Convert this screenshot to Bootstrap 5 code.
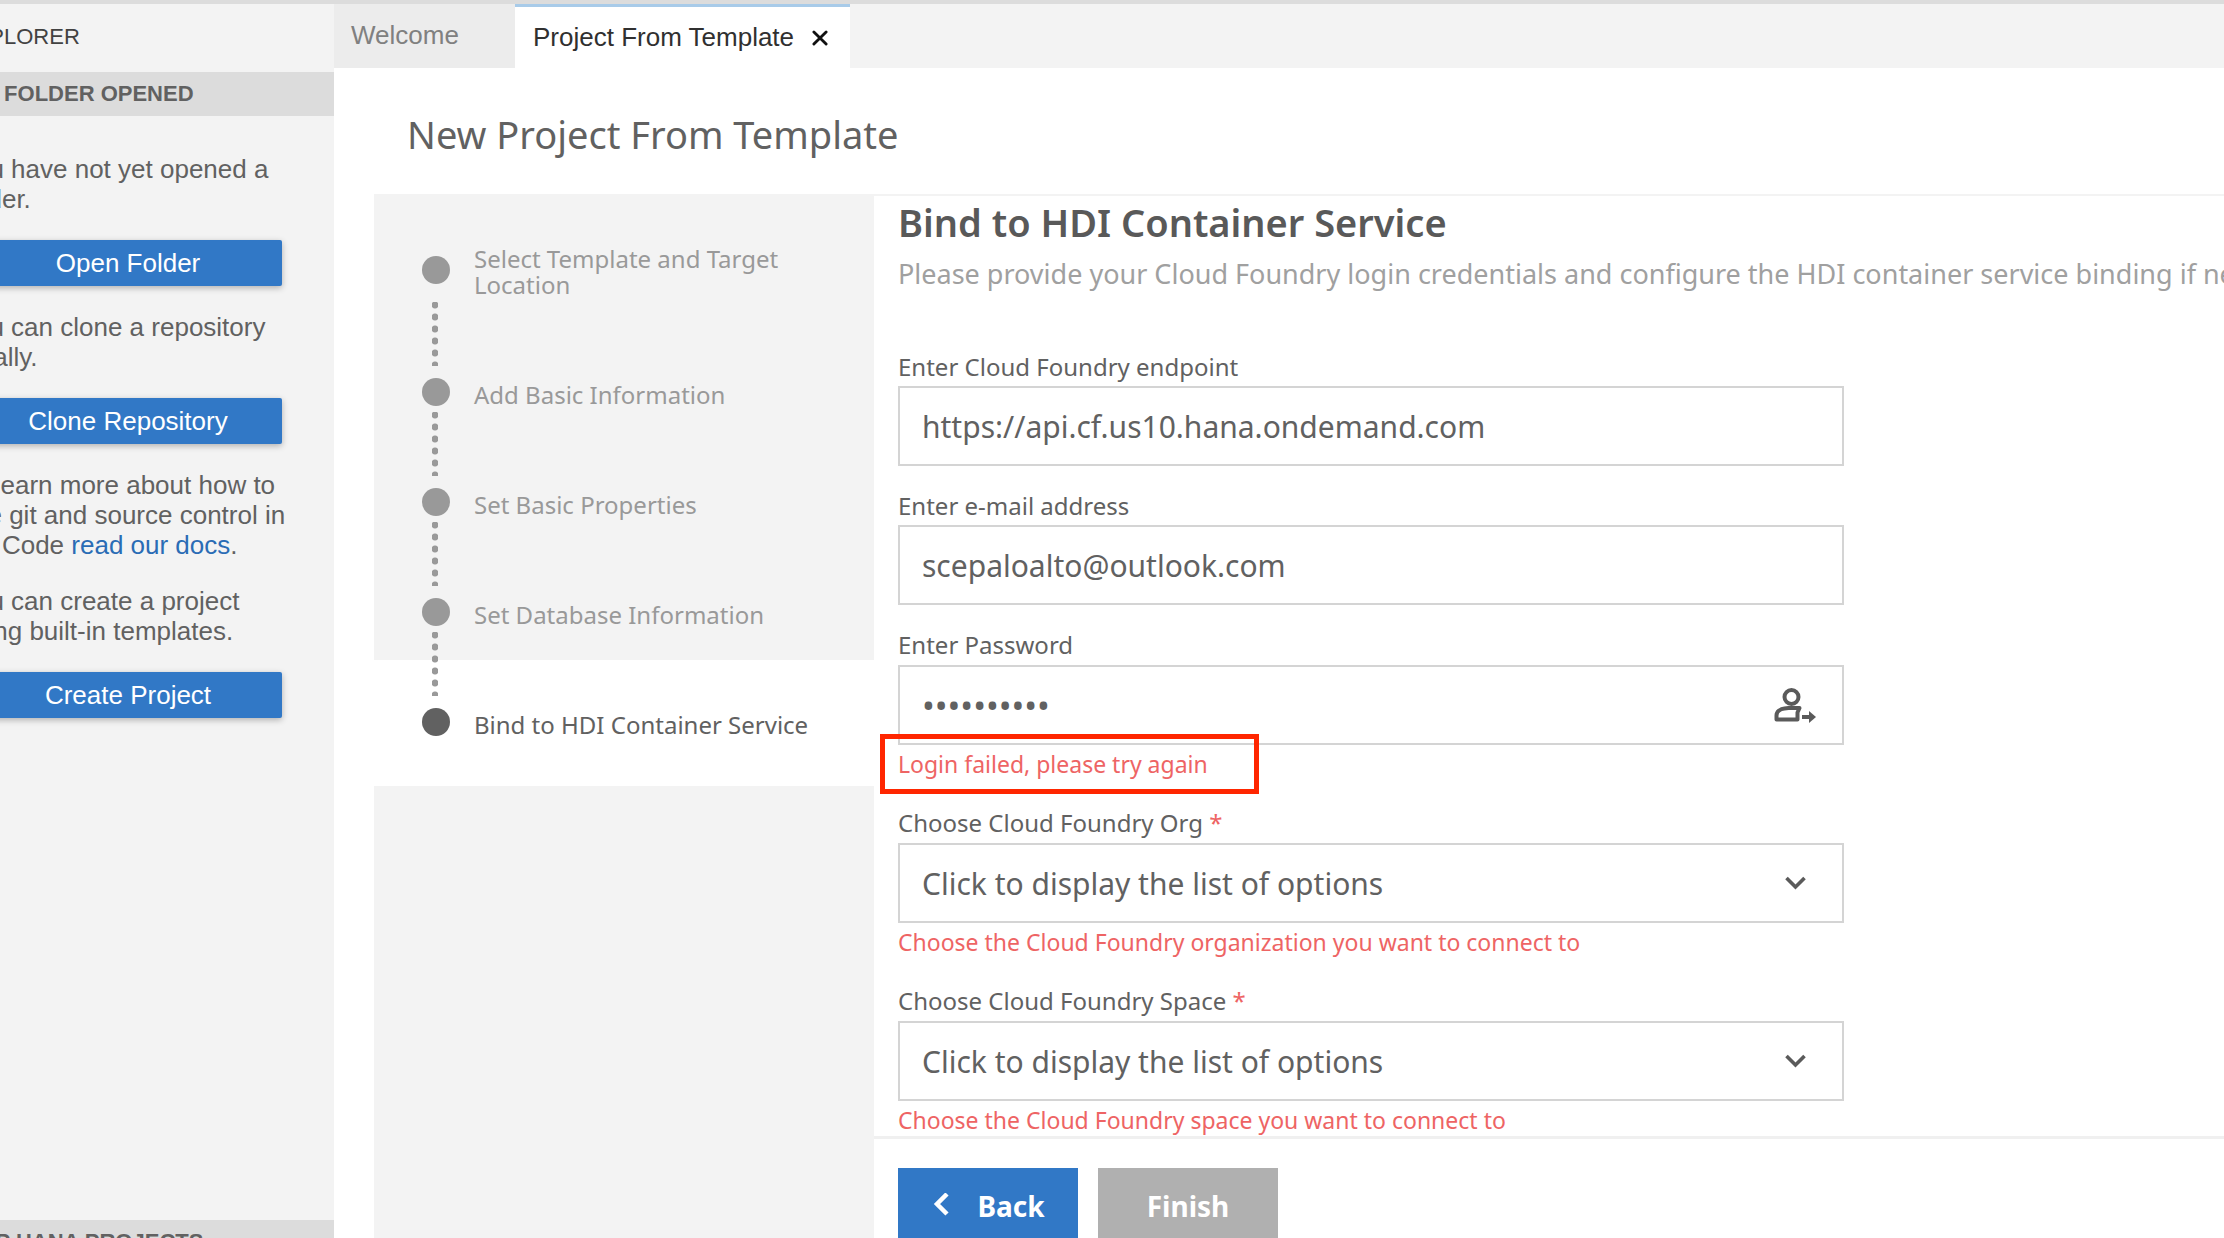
<!DOCTYPE html>
<html lang="en">
<head>
<meta charset="utf-8">
<meta name="viewport" content="width=device-width, initial-scale=1">
<title>Project From Template</title>
<link href="https://cdn.jsdelivr.net/npm/bootstrap@5.3.0/dist/css/bootstrap.min.css" rel="stylesheet">
<style>
  :root { --ui: "Liberation Sans", Arial, sans-serif; --form: "Noto Sans", "Segoe UI", sans-serif; --blue: #3178c6; --panel: #f3f3f3; --bar: #dcdcdc; --ink: #616161; --muted: #999; --alert: #ee6464; }
  body { font-family: var(--form); color: var(--ink); background: #fff; }
  .workbench { border-top: 4px solid var(--bar); }

  /* Explorer side bar, scrolled a little to the right */
  .explorer { width: 334px; background: var(--panel); font-family: var(--ui); font-size: 26px; line-height: 30px; }
  .explorer-inner { width: 374px; margin-left: -40px; }
  .explorer-title { height: 68px; font-size: 22px; font-weight: 400; line-height: 66px; color: #424242; }
  .section-bar { height: 44px; padding-left: 5px; background: var(--bar); font-size: 22px; font-weight: 700; line-height: 44px; flex: none; }
  .explorer-body { padding-top: 38px; }
  .explorer-body p { margin: 0 0 26px; }
  .explorer-body a { color: #2a6cb5; text-decoration: none; }
  .btn-explorer { display: block; width: 308px; height: 46px; margin: 0 0 26px 14px; padding: 0; border: 0; border-radius: 2px; background: var(--blue); color: #fff; font-size: 26px; line-height: 46px; box-shadow: 0 2px 6px rgba(0,0,0,.28); }
  .section-next { height: 18px; overflow: hidden; }

  /* Editor tabs */
  .editor-tabs { height: 64px; background: var(--panel); font-family: var(--ui); font-size: 26px; }
  .editor-tab { border: 0; padding: 0 18px; background: #ececec; color: #808080; border-top: 3px solid transparent; }
  .tab-welcome { width: 181px; padding-left: 17px; padding-bottom: 4px; text-align: left; }
  .tab-current { width: 335px; background: #fff; color: #303030; border-top-color: #a8cbe9; gap: 18px; }

  .page-title { margin: 0; padding: 41px 0 35px 73px; font-size: 38px; font-weight: 400; line-height: 50px; }

  /* Wizard steps */
  .step-panel { width: 500px; margin: 0 0 0 40px; padding: 52px 0 0; list-style: none; background: var(--panel); color: var(--muted); font-size: 24px; line-height: 26px; flex: none; }
  .step-item { display: flex; gap: 24px; padding: 0 60px 0 48px; }
  .step-track { width: 28px; flex: none; z-index: 1; }
  .step-dot { display: block; width: 28px; height: 28px; border-radius: 50%; background: var(--muted); }
  .step-line { display: block; width: 6px; height: 64px; margin: 6px 0 12px 10px; background: radial-gradient(circle, var(--muted) 3px, transparent 4px) 0 -3px / 6px 12px; }
  .step-text { padding-top: 4px; }
  .step-item.two-line .step-track { padding-top: 10px; }
  .step-item.two-line .step-line { margin-top: 18px; }
  .step-item.two-line .step-text { padding-top: 0; }
  .step-item.current { height: 126px; margin-top: -48px; padding-top: 48px; background: #fff; color: var(--ink); }
  .step-item.current .step-dot { background: var(--ink); }

  /* Step form */
  .form-pane { border-top: 2px solid var(--panel); }
  .form-scroll { height: 940px; padding-left: 24px; }
  .form-heading { margin: 0 0 8px; font-size: 38px; font-weight: 600; line-height: 52px; color: #595959; }
  .form-intro { margin: 0 0 62px; font-size: 27px; line-height: 36px; color: #a0a0a0; white-space: nowrap; }
  .form-fields { max-width: 946px; }
  .field { margin-bottom: 27px; }
  .field.has-note { margin-bottom: 33px; }
  .field label { display: block; margin-bottom: 6px; font-size: 24px; line-height: 26px; }
  .field.has-note label { margin-bottom: 7px; }
  .field .form-control, .field .form-select { height: 80px; padding: 0 76px 0 22px; border: 2px solid #d4d4d4; border-radius: 0; background: #fff; color: var(--ink); font-size: 30px; }
  .field .form-control[type=password] { font-size: 34px; }
  .field-icon { top: 0; right: 0; height: 80px; pointer-events: none; }
  .field-note { position: relative; margin: 6px 0 0; font-size: 23px; line-height: 26px; color: var(--alert); }
  .callout-box { position: absolute; left: -18px; top: -17px; width: 379px; height: 60px; border: 5px solid #ff2600; }
  .star { color: var(--alert); }
  .form-footer { border-top: 3px solid #f0f0f0; padding: 29px 0 0 24px; gap: 20px; }
  .btn-wizard { width: 180px; height: 76px; padding: 0; border: 0; border-radius: 0; background: var(--blue); color: #fff; font-size: 28px; font-weight: 700; gap: 26px; }
  .btn-wizard:disabled { background: #b0b0b0; color: #fff; opacity: 1; }
</style>
</head>
<body>
<div class="workbench d-flex vh-100 overflow-hidden">
  <aside class="explorer flex-shrink-0 overflow-hidden">
    <div class="explorer-inner d-flex flex-column h-100">
      <h1 class="explorer-title m-0">EXPLORER</h1>
      <h2 class="section-bar m-0">NO FOLDER OPENED</h2>
      <div class="explorer-body flex-grow-1">
        <p>You have not yet opened a<br>folder.</p>
        <button type="button" class="btn btn-explorer">Open Folder</button>
        <p>You can clone a repository<br>locally.</p>
        <button type="button" class="btn btn-explorer">Clone Repository</button>
        <p>To learn more about how to<br>use git and source control in<br>VS Code <a href="#docs">read our docs</a>.</p>
        <p>You can create a project<br>using built-in templates.</p>
        <button type="button" class="btn btn-explorer">Create Project</button>
      </div>
      <h2 class="section-bar section-next m-0">SAP HANA PROJECTS</h2>
    </div>
  </aside>

  <main class="d-flex flex-column flex-grow-1 overflow-hidden">
    <div class="editor-tabs d-flex flex-shrink-0">
      <button type="button" class="editor-tab tab-welcome">Welcome</button>
      <button type="button" class="editor-tab tab-current d-flex align-items-center">Project From Template
        <svg width="16" height="16" viewBox="0 0 17 17" fill="none" stroke="#111" stroke-width="3" stroke-linecap="round" aria-hidden="true"><path d="M2 2l13 13M15 2L2 15"/></svg>
      </button>
    </div>
    <h2 class="page-title">New Project From Template</h2>

    <div class="d-flex flex-grow-1">
      <ol class="step-panel">
        <li class="step-item two-line"><span class="step-track"><span class="step-dot"></span><span class="step-line"></span></span><span class="step-text">Select Template and Target Location</span></li>
        <li class="step-item"><span class="step-track"><span class="step-dot"></span><span class="step-line"></span></span><span class="step-text">Add Basic Information</span></li>
        <li class="step-item"><span class="step-track"><span class="step-dot"></span><span class="step-line"></span></span><span class="step-text">Set Basic Properties</span></li>
        <li class="step-item"><span class="step-track"><span class="step-dot"></span><span class="step-line"></span></span><span class="step-text">Set Database Information</span></li>
        <li class="step-item current" aria-current="step"><span class="step-track"><span class="step-dot"></span></span><span class="step-text">Bind to HDI Container Service</span></li>
      </ol>

      <form class="form-pane flex-grow-1 overflow-hidden">
        <div class="form-scroll overflow-hidden">
          <h3 class="form-heading">Bind to HDI Container Service</h3>
          <p class="form-intro">Please provide your Cloud Foundry login credentials and configure the HDI container service binding if needed.</p>
          <div class="form-fields">
            <div class="field">
              <label for="endpoint">Enter Cloud Foundry endpoint</label>
              <input class="form-control" id="endpoint" type="text" value="https://api.cf.us10.hana.ondemand.com">
            </div>
            <div class="field">
              <label for="email">Enter e-mail address</label>
              <input class="form-control" id="email" type="text" value="scepaloalto@outlook.com">
            </div>
            <div class="field has-note">
              <label for="password">Enter Password</label>
              <div class="position-relative">
                <input class="form-control" id="password" type="password" value="0123456789">
                <svg class="field-icon position-absolute" width="76" height="80" viewBox="0 0 76 80" fill="none" stroke="#5a5a5a" stroke-width="4" stroke-linejoin="round" aria-hidden="true"><circle cx="23.5" cy="32" r="7"/><path d="M8.500 54.500v-4c0-4 4-6.500 8-7l4-.5h11l-2 4.500v7z"/><path d="M34 52h8"/><path d="M41 46l7 6-7 6z" fill="#5a5a5a" stroke="none"/></svg>
              </div>
              <p class="field-note">Login failed, please try again<span class="callout-box"></span></p>
            </div>
            <div class="field has-note">
              <label for="org">Choose Cloud Foundry Org <span class="star">*</span></label>
              <div class="position-relative">
                <select class="form-select" id="org"><option>Click to display the list of options</option></select>
                <svg class="field-icon position-absolute" width="76" height="80" viewBox="0 0 76 80" fill="none" stroke="#5a5a5a" stroke-width="3.6" aria-hidden="true"><path d="M18.500 35l9 9 9-9"/></svg>
              </div>
              <p class="field-note">Choose the Cloud Foundry organization you want to connect to</p>
            </div>
            <div class="field has-note">
              <label for="space">Choose Cloud Foundry Space <span class="star">*</span></label>
              <div class="position-relative">
                <select class="form-select" id="space"><option>Click to display the list of options</option></select>
                <svg class="field-icon position-absolute" width="76" height="80" viewBox="0 0 76 80" fill="none" stroke="#5a5a5a" stroke-width="3.6" aria-hidden="true"><path d="M18.500 35l9 9 9-9"/></svg>
              </div>
              <p class="field-note">Choose the Cloud Foundry space you want to connect to</p>
            </div>
          </div>
        </div>
        <div class="form-footer d-flex">
          <button type="button" class="btn btn-wizard d-flex align-items-center justify-content-center"><svg width="20" height="26" viewBox="0 0 20 26" fill="none" stroke="#fff" stroke-width="4.500" aria-hidden="true"><path d="M16 1L6 11l10 10"/></svg>Back</button>
          <button type="button" class="btn btn-wizard" disabled>Finish</button>
        </div>
      </form>
    </div>
  </main>
</div>
<script src="https://cdn.jsdelivr.net/npm/bootstrap@5.3.0/dist/js/bootstrap.bundle.min.js"></script>
</body>
</html>
